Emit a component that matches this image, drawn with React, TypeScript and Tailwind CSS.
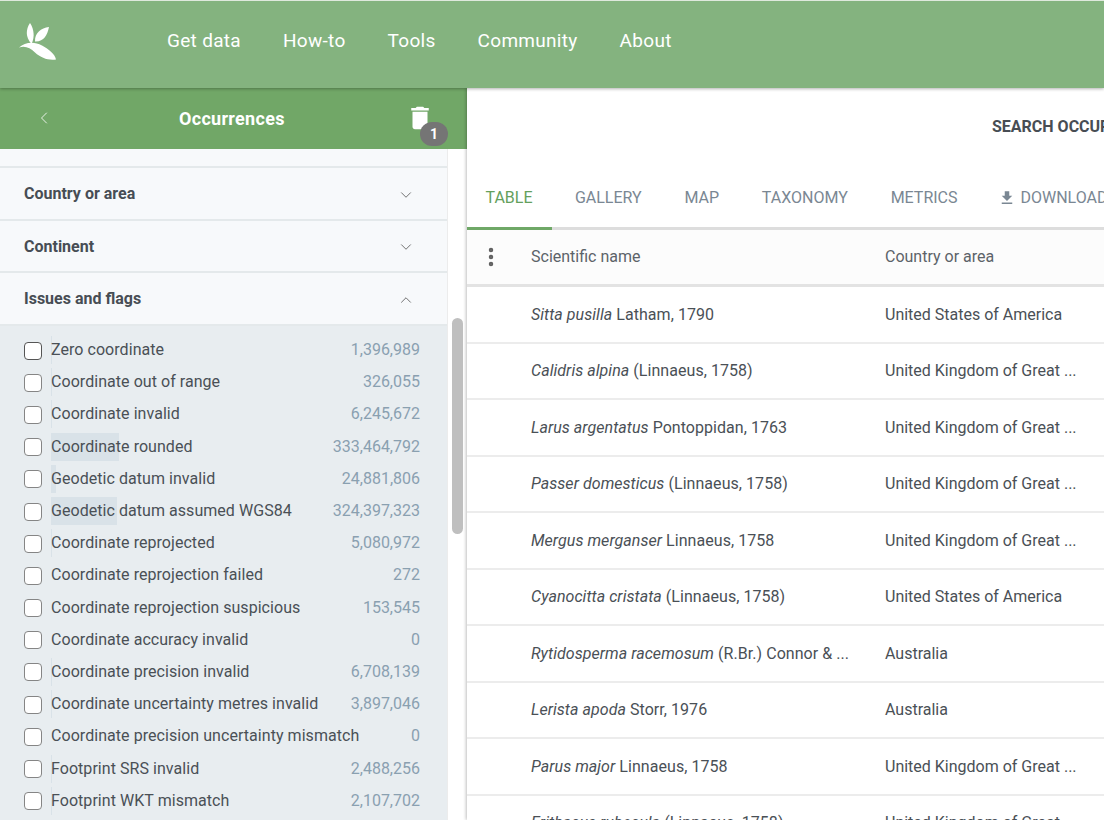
import { ChevronDown, ChevronLeft, ChevronUp, MoreVertical } from 'lucide-react'

const navItems = ['Get data', 'How-to', 'Tools', 'Community', 'About']

const tabs = ['Gallery', 'Map', 'Taxonomy', 'Metrics']

const issues: [string, number][] = [
  ['Zero coordinate', 1396989],
  ['Coordinate out of range', 326055],
  ['Coordinate invalid', 6245672],
  ['Coordinate rounded', 333464792],
  ['Geodetic datum invalid', 24881806],
  ['Geodetic datum assumed WGS84', 324397323],
  ['Coordinate reprojected', 5080972],
  ['Coordinate reprojection failed', 272],
  ['Coordinate reprojection suspicious', 153545],
  ['Coordinate accuracy invalid', 0],
  ['Coordinate precision invalid', 6708139],
  ['Coordinate uncertainty metres invalid', 3897046],
  ['Coordinate precision uncertainty mismatch', 0],
  ['Footprint SRS invalid', 2488256],
  ['Footprint WKT mismatch', 2107702],
]

const rows: [string, string, string][] = [
  ['Sitta pusilla', 'Latham, 1790', 'United States of America'],
  ['Calidris alpina', '(Linnaeus, 1758)', 'United Kingdom of Great ...'],
  ['Larus argentatus', 'Pontoppidan, 1763', 'United Kingdom of Great ...'],
  ['Passer domesticus', '(Linnaeus, 1758)', 'United Kingdom of Great ...'],
  ['Mergus merganser', 'Linnaeus, 1758', 'United Kingdom of Great ...'],
  ['Cyanocitta cristata', '(Linnaeus, 1758)', 'United States of America'],
  ['Rytidosperma racemosum', '(R.Br.) Connor & ...', 'Australia'],
  ['Lerista apoda', 'Storr, 1976', 'Australia'],
  ['Parus major', 'Linnaeus, 1758', 'United Kingdom of Great ...'],
  ['Erithacus rubecula', '(Linnaeus, 1758)', 'United Kingdom of Great ...'],
]

function Logo() {
  return (
    <svg width="44" height="44" viewBox="15 20 44 44" className="mb-[6px] block" fill="#fff">
      <path d="M30 23 C26 29 25 37 31.5 44 C35 37 34 29 30 23 Z" />
      <path d="M49 27 C41 28 34.5 33 35 41.5 C43.5 42 47.5 35 49 27 Z" />
      <path d="M19 47.5 C25 42 34 41 42 45.5 C49 49.5 55 54 56 59.5 C48 60.5 41 58 35 52.5 C30 47.5 25 45.5 19 47.5 Z" />
    </svg>
  )
}

function TrashIcon() {
  return (
    <svg width="30" height="30" viewBox="0 0 24 24" fill="#fff" className="block">
      <path d="M6 19c0 1.1.9 2 2 2h8c1.1 0 2-.9 2-2V7H6v12zM19 4h-3.5l-1-1h-5l-1 1H5v2h14V4z" />
    </svg>
  )
}

function DownloadIcon() {
  return (
    <svg width="18" height="18" viewBox="0 0 24 24" fill="currentColor" className="mr-[4px] block">
      <path d="M19 9h-4V3H9v6H5l7 7 7-7zM5 18v2h14v-2H5z" />
    </svg>
  )
}

function FilterHeader({ title, open }: { title: string; open?: boolean }) {
  return (
    <div className="flex h-[52.5px] items-center justify-between border-b-2 border-[#e4e9eb] pl-6 pr-[32px] pt-[2px]">
      <span className="text-[16px] font-bold text-[#474d54]">{title}</span>
      {open ? (
        <ChevronUp size={18} strokeWidth={1.1} className="mt-[1px] text-[#555]" />
      ) : (
        <ChevronDown size={18} strokeWidth={1.1} className="mt-[1px] text-[#555]" />
      )}
    </div>
  )
}

function IssueRow({ label, count, focused }: { label: string; count: number; focused: boolean }) {
  const barWidth = count > 200000 ? Math.max(1, count * 2.04e-7) : 0
  return (
    <div className="flex h-[32.2px] items-center pl-6 pr-[27px]">
      <span
        className={
          focused
            ? 'mr-[9px] mt-[1px] h-[18px] w-[18px] shrink-0 rounded-[4px] border-[1.5px] border-[#555555] bg-white'
            : 'mr-[9px] mt-[1px] h-[18px] w-[18px] shrink-0 rounded-[4px] border-[1.5px] border-[#858585] bg-white'
        }
      />
      <div className="relative flex h-[28px] min-w-0 flex-1 items-center justify-between">
        <div className="absolute left-0 top-0 h-full bg-[#d9e2e8]" style={{ width: barWidth }} />
        <span className="relative whitespace-nowrap text-[16px] tracking-[0.05px] text-[#4a5056]">{label}</span>
        <span className="relative text-[16px] text-[#8aa0b0]">{count.toLocaleString('en-US')}</span>
      </div>
    </div>
  )
}

export default function App() {
  return (
    <div className="flex h-[820px] w-[1104px] flex-col overflow-hidden bg-white font-['Roboto',sans-serif]">
      <header className="z-10 flex h-[88px] shrink-0 items-center border-t border-[#dfe9dd] bg-[#84b37f] shadow-[0_1px_3px_rgba(0,0,0,0.3)]">
        <div className="w-[167px] pl-[15px]">
          <Logo />
        </div>
        <nav className="flex gap-[42px] pb-[6px]">
          {navItems.map((item) => (
            <a key={item} className="text-[19px] tracking-[0.3px] text-white">
              {item}
            </a>
          ))}
        </nav>
      </header>

      <div className="flex min-h-0 flex-1">
        <aside className="flex w-[467px] shrink-0 flex-col">
          <div className="flex h-[61px] shrink-0 items-center bg-[#71a767] pl-[34px] pr-[19px]">
            <ChevronLeft size={20} strokeWidth={1} className="mb-[2px] text-white" />
            <span className="ml-[125px] text-[18px] font-bold tracking-[0.3px] text-white">Occurrences</span>
            <div className="relative mb-[2px] ml-auto mr-[13px]">
              <TrashIcon />
              <span className="absolute left-[15px] top-[19.5px] flex h-[24px] w-[28px] items-center justify-center rounded-full bg-[#757575] text-[14px] font-bold text-white">
                1
              </span>
            </div>
          </div>
          <div className="flex min-h-0 flex-1">
            <div className="w-[448px] shrink-0 border-r border-[#ececec] bg-[#f7f9fb]">
              <div className="h-[19px] border-b-2 border-[#e4e9eb]" />
              <FilterHeader title="Country or area" />
              <FilterHeader title="Continent" />
              <FilterHeader title="Issues and flags" open />
              <div className="bg-[#e8edf0] pt-[8.5px] pb-[40px]">
                {issues.map(([label, count], i) => (
                  <IssueRow key={label} label={label} count={count} focused={i === 0} />
                ))}
              </div>
            </div>
            <div className="flex-1 bg-white pl-[4px] pr-[4px] pt-[169px]">
              <div className="h-[216px] w-[11px] rounded-[6px] bg-[#bfbfbf]" />
            </div>
          </div>
        </aside>

        <main className="z-[5] min-w-0 flex-1 shadow-[-1px_0_3px_rgba(0,0,0,0.25)]">
          <div className="flex h-[89px] items-center pb-[11px] pl-[525px] text-[16px] font-bold whitespace-nowrap text-[#474d54]">
            SEARCH OCCURRENCES
          </div>
          <div className="flex h-[53px] items-stretch border-b-[3px] border-[#dddddd]">
            <div className="relative flex w-[85px] shrink-0 items-center pb-[8px] pl-[18.5px] text-[16px] text-[#64a05c]">
              TABLE
              <span className="absolute -bottom-[3px] left-0 h-[3px] w-full bg-[#6fa867]" />
            </div>
            <div className="flex items-stretch pl-[1.5px]">
              {tabs.map((tab) => (
                <div key={tab} className="flex items-center px-[21.4px] pb-[8px] text-[16px] uppercase whitespace-nowrap text-[#7a8793]">
                  {tab}
                </div>
              ))}
              <div className="flex items-center pb-[8px] pl-[19.5px] text-[16px] whitespace-nowrap text-[#7a8793]">
                <DownloadIcon />
                DOWNLOAD
              </div>
            </div>
          </div>
          <div className="flex h-[57px] items-center border-b-[3px] border-[#e3e3e3] bg-[#fcfcfc] text-[16px] text-[#5c6369]">
            <div className="flex w-[64px] justify-start pl-[12px]">
              <MoreVertical size={24} strokeWidth={2.5} className="text-[#616161]" />
            </div>
            <div className="w-[354px]">Scientific name</div>
            <div className="whitespace-nowrap">Country or area</div>
          </div>
          {rows.map(([name, author, country]) => (
            <div
              key={name}
              className="flex h-[56.5px] shrink-0 items-center border-b-2 border-[#ececec] pt-[1px] text-[16px] text-[#4a5056]"
            >
              <div className="w-[64px]" />
              <div className="w-[354px] whitespace-nowrap tracking-[0.05px]">
                <i>{name}</i> {author}
              </div>
              <div className="whitespace-nowrap">{country}</div>
            </div>
          ))}
        </main>
      </div>
    </div>
  )
}
